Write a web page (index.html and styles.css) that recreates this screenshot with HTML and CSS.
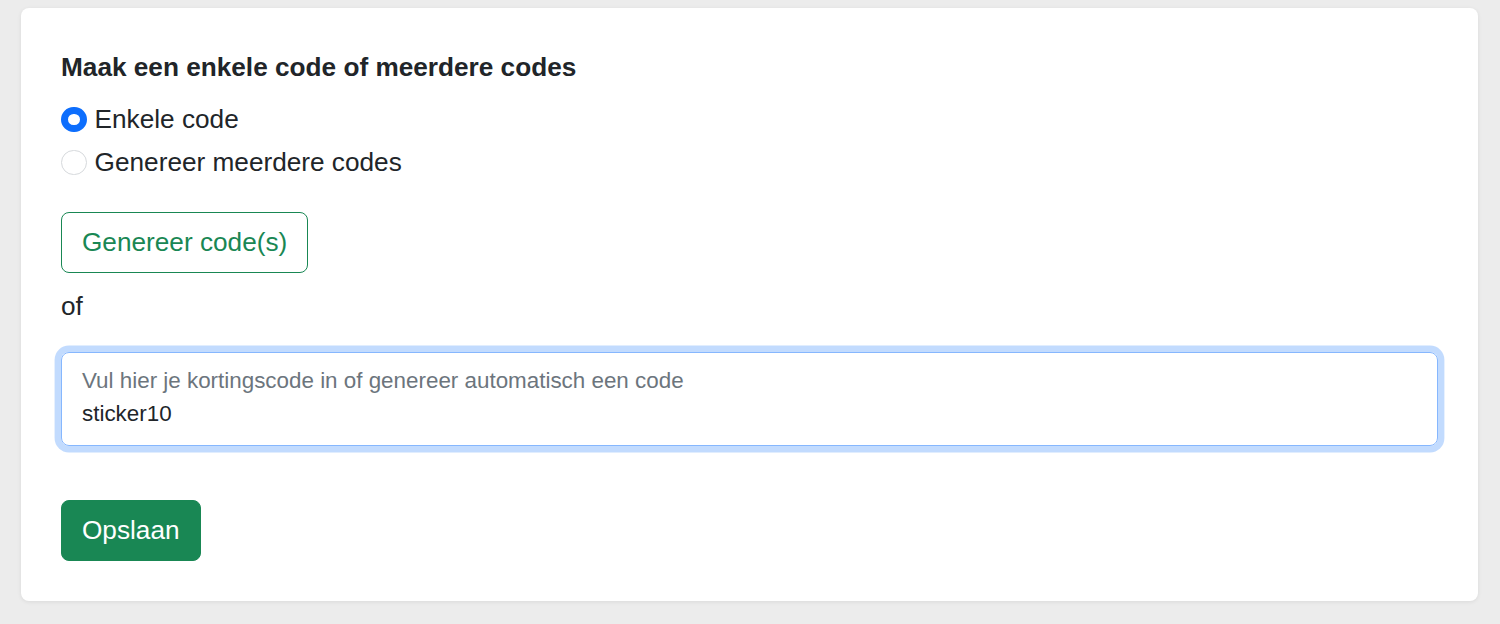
FILE: index.html
```html
<!DOCTYPE html>
<html lang="nl">
<head>
<meta charset="utf-8">
<title>Kortingscode</title>
<link rel="stylesheet" href="styles.css">
</head>
<body>
  <div class="card">
    <h5 class="title">Maak een enkele code of meerdere codes</h5>
    <label class="check">
      <span class="radio radio-checked"></span>
      <span>Enkele code</span>
    </label>
    <label class="check">
      <span class="radio"></span>
      <span>Genereer meerdere codes</span>
    </label>
    <button class="btn btn-outline" type="button">Genereer code(s)</button>
    <p class="or">of</p>
    <div class="field">
      <div class="hint">Vul hier je kortingscode in of genereer automatisch een code</div>
      <div class="value">sticker10</div>
    </div>
    <button class="btn btn-primary" type="button">Opslaan</button>
  </div>
</body>
</html>
```
FILE: styles.css
```css
html, body {
  margin: 0;
  padding: 0;
}
body {
  background: #ececec;
  font-family: "Liberation Sans", Arial, Helvetica, sans-serif;
  color: #212529;
  font-size: 26.2px;
  line-height: 39px;
  padding: 8px 22px 23px 21px;
}
.card {
  background: #fff;
  border-radius: 8px;
  box-shadow: 0 1px 4px rgba(0, 0, 0, 0.08);
  padding: 40px;
  display: flex;
  flex-direction: column;
  align-items: flex-start;
}
.title {
  margin: 0 0 13px 0;
  font-size: 26.2px;
  font-weight: 700;
  line-height: 39px;
}
.check {
  display: flex;
  align-items: center;
  gap: 8px;
  margin-bottom: 4px;
  line-height: 39px;
}
.radio {
  width: 25.6px;
  height: 25.6px;
  box-sizing: border-box;
  border-radius: 50%;
  border: 1px solid #d6d9dc;
  background: #fff;
  flex: none;
}
.radio-checked {
  background: #fff;
  border: 7px solid #0d6efd;
}
.btn {
  font-family: inherit;
  font-size: 26.2px;
  line-height: 39px;
  padding: 10px 20px;
  border-radius: 8px;
  cursor: pointer;
}
.btn-outline {
  margin-top: 26px;
  background: #fff;
  color: #198754;
  border: 1px solid #198754;
}
.or {
  margin: 14px 0 26px 0;
}
.field {
  align-self: stretch;
  box-sizing: border-box;
  height: 94px;
  border: 1px solid #86b7fe;
  border-radius: 8px;
  box-shadow: 0 0 0 6.4px rgba(13, 110, 253, 0.25);
  padding: 11px 20px 0 20px;
  font-size: 22.4px;
  line-height: 33px;
}
.hint {
  color: #6c757d;
}
.value {
  color: #212529;
}
.btn-primary {
  margin-top: 54px;
  background: #198754;
  color: #fff;
  border: 1px solid #198754;
}
```
